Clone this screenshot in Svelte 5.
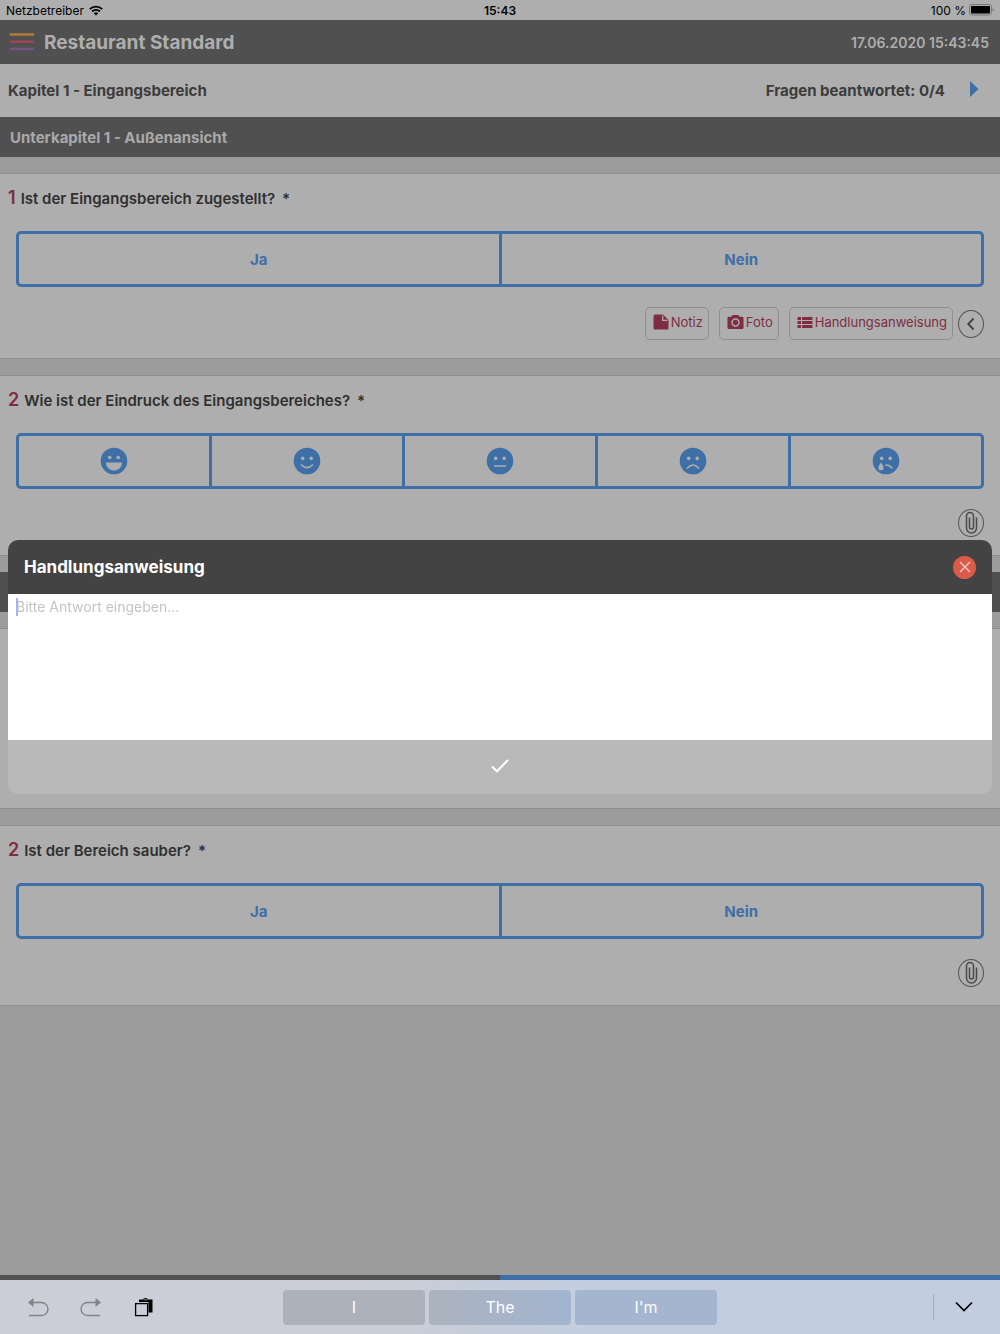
<script>
    const sections = [
        {
            title: 'Unterkapitel 1 - Außenansicht',
            questions: [
                {number: '1', text: 'Ist der Eingangsbereich zugestellt?', answers: ['Ja', 'Nein'], open: true},
                {number: '2', text: 'Wie ist der Eindruck des Eingangsbereiches?', faces: true}
            ]
        },
        {
            title: '',
            questions: [
                {number: '', text: '', answers: []},
                {number: '2', text: 'Ist der Bereich sauber?', answers: ['Ja', 'Nein']}
            ]
        }
    ]

    const faces = ['grin', 'smile', 'neutral', 'frown', 'cry']
    const suggestions = ['I', 'The', "I'm"]

    let answer = $state('')
    let focused = $state(true)
</script>

{#snippet face(kind)}
    <svg width="28" height="28" viewBox="0 0 28 28" aria-hidden="true">
        <circle cx="14" cy="14" r="13.3" fill="#3e6fa6" />
        <g fill="#aeaeae">
            <circle cx="9.7" cy={kind === 'grin' ? 10.5 : 11.4} r="1.8" />
            <circle cx="18.2" cy={kind === 'grin' ? 10.5 : 11.4} r="1.8" />
            {#if kind === 'grin'}
                <path d="M6 16.2q0-.8.8-.8h14.4q.8 0 .8.8c-.5 4.300-3.800 7.300-8 7.300s-7.500-3-8-7.300z" />
            {:else if kind === 'cry'}
                <path d="M9 15.500c1.500 2.200 2.600 3.700 2.600 5.200a2.600 2.600 0 0 1-5.200 0c0-1.500 1.100-3 2.600-5.200z" />
            {/if}
        </g>
        <g fill="none" stroke="#aeaeae" stroke-width="1.700" stroke-linecap="round">
            {#if kind === 'smile'}
                <path d="M8.500 18q5.500 5.200 11 0" />
            {:else if kind === 'neutral'}
                <path d="M8.700 19h10.600" />
            {:else if kind === 'frown'}
                <path d="M8.500 21q5.500-6 11 0" />
            {:else if kind === 'cry'}
                <path d="M14 18q3.500 0 5.700 2.800" />
            {/if}
        </g>
    </svg>
{/snippet}

<div class="page">
    <div class="status">
        <span class="carrier">
            Netzbetreiber
            <svg width="14" height="11" viewBox="0 0 14 11" aria-hidden="true">
                <g fill="none" stroke="#000" stroke-width="1.900">
                    <path d="M.8 4.100a8.900 8.900 0 0 1 12.400 0" />
                    <path d="M3.100 6.500a5.600 5.600 0 0 1 7.800 0" />
                </g>
                <path d="M7 10.500 4.800 8.200a3.200 3.200 0 0 1 4.400 0z" />
            </svg>
        </span>
        <b>15:43</b>
        <span class="battery">
            100 %
            <svg width="25" height="12" viewBox="0 0 25 12" aria-hidden="true">
                <rect x=".5" y=".5" width="22" height="10.500" rx="2.500" fill="none" stroke="#777" />
                <rect x="2" y="2" width="19" height="7.500" rx="1" />
                <path d="M23.700 4q1.200.7 1.200 1.800t-1.200 1.800z" fill="#777" />
            </svg>
        </span>
    </div>

    <header class="topbar">
        <button type="button" class="plain" aria-label="Menü">
            <svg width="26" height="20" viewBox="0 0 26 20" aria-hidden="true">
                <g fill="none" stroke-width="2.500" stroke-linecap="round">
                    <path d="M1.800 2.500h22.200" stroke="#b07c39" />
                    <path d="M1.800 9.800h22.200" stroke="#9c4556" />
                    <path d="M1.800 17h22.200" stroke="#71577f" />
                </g>
            </svg>
        </button>
        <h1>Restaurant Standard</h1>
        <time datetime="2020-06-17T15:43:45">17.06.2020 15:43:45</time>
    </header>

    <div class="chapter">
        <span>Kapitel 1 - Eingangsbereich</span>
        <span class="progress">Fragen beantwortet: 0/4</span>
        <button type="button" class="plain" aria-label="Weiter">
            <svg width="10" height="20" viewBox="0 0 10 20" aria-hidden="true">
                <path d="M1 0 9.500 8 1 16z" fill="#3e6fa6" />
            </svg>
        </button>
    </div>

    <main>
        {#each sections as section}
            <h2>{section.title}</h2>
            {#each section.questions as question}
                <section class="card">
                    <p class="question">
                        {#if question.text}
                            <span class="number">{question.number}</span>
                            <span>{question.text}</span>
                            <span class="required">*</span>
                        {/if}
                    </p>
                    <div class="answers">
                        {#if question.faces}
                            {#each faces as kind}
                                <button type="button" aria-label={kind}>{@render face(kind)}</button>
                            {/each}
                        {:else}
                            {#each question.answers as label}
                                <button type="button">{label}</button>
                            {/each}
                        {/if}
                    </div>
                    <div class="tools">
                        {#if question.open}
                            <button type="button" class="tool">
                                <svg width="16" height="16" viewBox="0 0 16 16" aria-hidden="true">
                                    <path d="M2 .5h8L15.500 6v8q0 1.500-1.500 1.500H2Q.5 15.500.5 14V2Q.5.5 2 .5z" />
                                    <path d="M9.700 1.500v4.800h4.800" fill="none" stroke="#aeaeae" stroke-width="1.300" />
                                </svg>
                                Notiz
                            </button>
                            <button type="button" class="tool">
                                <svg width="17" height="16" viewBox="0 0 18 16" aria-hidden="true">
                                    <path d="M6 .5h6l1.500 2H16q1.500 0 1.500 1.500v10q0 1.500-1.500 1.500H2Q.5 15.500.5 14V4Q.5 2.500 2 2.500h2.500z" />
                                    <circle cx="9" cy="8.500" r="3.700" fill="none" stroke="#aeaeae" stroke-width="1.500" />
                                </svg>
                                Foto
                            </button>
                            <button type="button" class="tool">
                                <svg width="16" height="16" viewBox="0 0 16 16" aria-hidden="true">
                                    <path d="M.5 3H4v3H.5zM5 3h10.500v3H5zM.5 7H4v3H.5zM5 7h10.500v3H5zM.5 11H4v3H.5zM5 11h10.500v3H5z" />
                                </svg>
                                Handlungsanweisung
                            </button>
                        {/if}
                        {#if question.text}
                            <button type="button" class="round" aria-label="Anhänge">
                                {#if question.open}
                                    <svg width="12" height="14" viewBox="0 0 12 14" aria-hidden="true">
                                        <path d="M8.500 1.500 3.300 7l5.200 5.500" fill="none" stroke="#444" stroke-width="1.900" />
                                    </svg>
                                {:else}
                                    <svg width="14" height="24" viewBox="0 0 14 24" aria-hidden="true">
                                        <path d="M12.500 6.500v10.500a5 5 0 0 1-10 0V5a3.500 3.500 0 0 1 7 0v11a2 2 0 0 1-4 0V6.500" fill="none" stroke="#4a4a4a" stroke-width="1.500" />
                                    </svg>
                                {/if}
                            </button>
                        {/if}
                    </div>
                </section>
            {/each}
        {/each}
    </main>

    <div class="stripe"></div>

    <footer class="keyboard">
        <div class="edit">
            <button type="button" class="plain" aria-label="Rückgängig">
                <svg width="22" height="20" viewBox="0 0 22 20" aria-hidden="true">
                    <path d="M5 5.500h9.500a6.500 6.500 0 0 1 0 13H2" fill="none" stroke="#808286" stroke-width="1.300" />
                    <path d="M1 5.500 6.500 1v9z" fill="#808286" />
                </svg>
            </button>
            <button type="button" class="plain" aria-label="Wiederholen">
                <svg width="22" height="20" viewBox="0 0 22 20" aria-hidden="true">
                    <path d="M17 5.500H7.500a6.500 6.500 0 0 0 0 13H20" fill="none" stroke="#808286" stroke-width="1.300" />
                    <path d="M21 5.500 15.500 1v9z" fill="#808286" />
                </svg>
            </button>
            <button type="button" class="plain" aria-label="Einfügen">
                <svg width="22" height="20" viewBox="0 0 22 20" aria-hidden="true">
                    <path d="M6 2.500h4q0-1.500 2.500-1.500t2.500 1.500h4.500v13h-4V5H6z" />
                    <path d="M10.500 2.800h4" stroke="#8b8d92" />
                    <rect x="2.600" y="6.600" width="12" height="12" fill="#cbced6" stroke="#000" stroke-width="1.300" />
                </svg>
            </button>
        </div>
        <div class="suggestions">
            {#each suggestions as word}
                <button type="button" onclick={() => answer += word + ' '}>{word}</button>
            {/each}
        </div>
        <div class="dismiss">
            <button type="button" class="plain" aria-label="Tastatur ausblenden">
                <svg width="18" height="12" viewBox="0 0 18 12" aria-hidden="true">
                    <path d="M1 1.500 9 9.500 17 1.500" fill="none" stroke="#000" stroke-width="1.700" />
                </svg>
            </button>
        </div>
    </footer>

    <div class="modal" role="dialog" aria-labelledby="modal-title">
        <div class="modal-head">
            <h3 id="modal-title">Handlungsanweisung</h3>
            <button type="button" class="close" aria-label="Schließen">
                <svg width="12" height="12" viewBox="0 0 12 12" aria-hidden="true">
                    <path d="M1 1 11 11M11 1 1 11" stroke="#f3d4cf" stroke-width="1.300" />
                </svg>
            </button>
        </div>
        <div class="field">
            <textarea aria-labelledby="modal-title" placeholder="Bitte Antwort eingeben..." bind:value={answer}
                      onblur={() => focused = false}></textarea>
            {#if focused && answer === ''}
                <span class="caret"></span>
            {/if}
        </div>
        <button type="button" class="confirm" aria-label="Speichern">
            <svg width="18" height="14" viewBox="0 0 18 14" aria-hidden="true">
                <path d="M1 7.500 6 12.300 17 1" fill="none" stroke="#fff" stroke-width="2" />
            </svg>
        </button>
    </div>
</div>

<style>
    :global(body) {
        background-color: #9c9c9c;
    }

    .page {
        display: flex;
        flex-direction: column;
        min-height: 100vh;
        box-sizing: border-box;
        font-family: Inter, "Liberation Sans", sans-serif;
        color: #303030;
    }

    button {
        font-family: inherit;
        cursor: pointer;
    }

    svg {
        display: block;
        flex-shrink: 0;
    }

    h1, h2, h3, p {
        margin: 0;
    }

    .plain {
        display: flex;
        padding: 0;
        border: none;
        background: none;
    }

    .status {
        display: grid;
        grid-template-columns: 1fr auto 1fr;
        align-items: center;
        height: 20px;
        padding: 0 6px;
        background-color: #aeaeae;
        color: #000;
        font-size: 12px;
    }

    .status b {
        font-weight: 600;
    }

    .carrier, .battery {
        display: flex;
        align-items: center;
        gap: 5px;
    }

    .battery {
        justify-content: flex-end;
        gap: 3px;
    }

    .topbar {
        display: flex;
        align-items: center;
        gap: 9px;
        height: 44px;
        padding: 0 11px 0 9px;
        background-color: #505050;
        color: #aeaeae;
    }

    h1 {
        flex: 1;
        font-size: 19px;
        font-weight: 700;
    }

    time {
        font-size: 14px;
        font-weight: 600;
    }

    .chapter {
        display: flex;
        align-items: center;
        height: 53px;
        padding: 0 21px 0 8px;
        background-color: #aeaeae;
        color: #3c3c3c;
        font-size: 15px;
        font-weight: 700;
    }

    .progress {
        margin: 0 24px 0 auto;
    }

    main {
        flex: 1;
    }

    h2 {
        height: 40px;
        margin-bottom: 16px;
        padding: 0 10px;
        background-color: #505050;
        color: #a9a9a9;
        font-size: 15px;
        font-weight: 700;
        line-height: 42px;
    }

    .card {
        margin-bottom: 16px;
        padding: 0 16px 18px;
        border-top: 1px solid #8f8f8f;
        border-bottom: 1px solid #8f8f8f;
        background-color: #aeaeae;
    }

    .question {
        display: flex;
        align-items: baseline;
        gap: 5px;
        height: 57px;
        margin-left: -8px;
        box-sizing: border-box;
        padding-top: 12px;
        font-size: 15px;
        font-weight: 600;
        line-height: 24px;
    }

    .number {
        color: #7f2d42;
        font-size: 18px;
    }

    .required {
        margin-left: 2px;
    }

    .answers {
        display: flex;
        height: 56px;
        box-sizing: border-box;
        border: 3px solid #3e6fa6;
        border-radius: 5px;
    }

    .answers button {
        display: flex;
        flex: 1;
        align-items: center;
        justify-content: center;
        padding: 0;
        border: none;
        background: none;
        color: #3e6fa6;
        font-size: 15px;
        font-weight: 700;
    }

    .answers button + button {
        border-left: 3px solid #3e6fa6;
    }

    .tools {
        display: flex;
        align-items: center;
        justify-content: flex-end;
        min-height: 28px;
        margin-top: 20px;
    }

    .tool {
        display: flex;
        align-items: center;
        gap: 2px;
        height: 33px;
        margin-right: 10px;
        padding: 0 5px 3px 7px;
        border: 1px solid #8f8f8f;
        border-radius: 5px;
        background: none;
        color: #7f2d42;
        font-size: 13px;
    }

    .tool:nth-last-child(2) {
        margin-right: 5px;
    }

    .tool svg {
        fill: #7f2d42;
    }

    .round {
        display: flex;
        align-items: center;
        justify-content: center;
        width: 26px;
        height: 28px;
        padding: 0;
        border: 1px solid #555;
        border-radius: 50%;
        background: none;
    }

    .stripe {
        height: 5px;
        background: linear-gradient(to right, #505050 50%, #3e6fa6 50%);
    }

    .keyboard {
        display: grid;
        grid-template-columns: 1fr auto 1fr;
        align-items: center;
        height: 54px;
        padding: 0 27px;
        background: linear-gradient(to right, #cbced6 35%, #c2cedf 60%);
    }

    .edit {
        display: flex;
        gap: 31px;
    }

    .suggestions {
        display: flex;
        gap: 4px;
    }

    .suggestions button {
        width: 142px;
        height: 35px;
        padding: 0;
        border: none;
        border-radius: 4px;
        background-color: #adb1bb;
        color: #fff;
        font-size: 16px;
    }

    .suggestions button:nth-child(2) {
        background: linear-gradient(to right, #abb3be, #a3b5d0);
    }

    .suggestions button:nth-child(3) {
        background-color: #a3b5cf;
    }

    .dismiss {
        display: flex;
        align-items: center;
        justify-content: flex-end;
    }

    .dismiss button {
        padding: 7px 0 7px 21px;
        border-left: 1px solid #a5afbb;
    }

    .modal {
        position: fixed;
        top: 540px;
        right: 8px;
        left: 8px;
        overflow: hidden;
        border-radius: 10px;
        background-color: #b9b9b9;
    }

    .modal-head {
        display: flex;
        align-items: center;
        justify-content: space-between;
        height: 54px;
        padding: 0 16px;
        background-color: #434343;
    }

    h3 {
        color: #fff;
        font-size: 17px;
        font-weight: 700;
    }

    .close {
        display: flex;
        align-items: center;
        justify-content: center;
        width: 23px;
        height: 23px;
        padding: 0;
        border: none;
        border-radius: 50%;
        background-color: #db5a48;
    }

    .field {
        position: relative;
        background-color: #fff;
    }

    textarea {
        display: block;
        width: 100%;
        height: 146px;
        box-sizing: border-box;
        padding: 4px 8px;
        border: none;
        outline: none;
        resize: none;
        background: none;
        color: #303030;
        font-family: inherit;
        font-size: 14px;
        line-height: 18px;
    }

    textarea::placeholder {
        color: #c4c4c6;
        opacity: 1;
    }

    .caret {
        position: absolute;
        top: 4px;
        left: 8px;
        width: 2px;
        height: 18px;
        background-color: #a3b5f0;
    }

    .confirm {
        display: flex;
        align-items: center;
        justify-content: center;
        width: 100%;
        height: 54px;
        padding: 0 0 2px;
        border: none;
        background: none;
    }
</style>
